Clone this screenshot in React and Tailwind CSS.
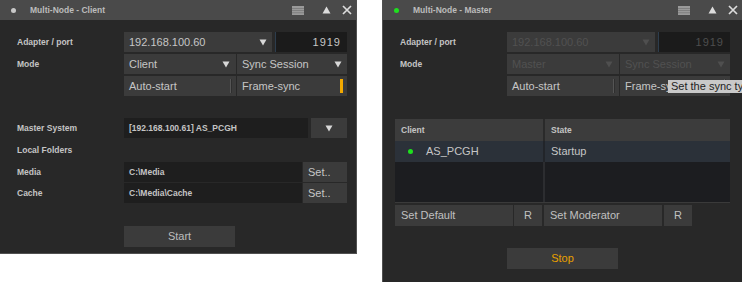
import React from "react";

function Arrow({ dim }) {
  return (
    <svg width="8" height="7" viewBox="0 0 8 7" className="shrink-0">
      <path d="M0.5 0.5 L7.5 0.5 L4 6.5 Z" fill={dim ? "#4f4f4f" : "#d8d8d8"} />
    </svg>
  );
}

function TitleBar({ title, dot }) {
  return (
    <div className="h-[20px] bg-[#4a4a4a] flex items-center shrink-0">
      <div className={`ml-[11px] w-[5px] h-[5px] rounded-full ${dot}`} />
      <span className="ml-[14px] text-[8.5px] font-bold text-[#bcbcbc] leading-none">{title}</span>
      <div className="ml-auto flex items-center">
        <svg width="12" height="9" viewBox="0 0 12 9" className="mr-[18px]">
          <rect x="0" y="0" width="12" height="9" fill="#9a9a9a" />
          <rect x="0" y="2" width="12" height="0.8" fill="#7a7a7a" />
          <rect x="0" y="4.2" width="12" height="0.8" fill="#7a7a7a" />
          <rect x="0" y="6.4" width="12" height="0.8" fill="#7a7a7a" />
        </svg>
        <svg width="9" height="8" viewBox="0 0 9 8" className="mr-[11px]">
          <path d="M4.5 0.5 L8.5 7.5 L0.5 7.5 Z" fill="#dcdcdc" />
        </svg>
        <svg width="10" height="10" viewBox="0 0 10 10" className="mr-[4px]">
          <path d="M1 1 L9 9 M9 1 L1 9" stroke="#dcdcdc" strokeWidth="1.7" />
        </svg>
      </div>
    </div>
  );
}

function Label({ children }) {
  return (
    <div className="w-[124px] pl-[17px] text-[8.5px] font-bold text-[#c4c4c4] shrink-0">{children}</div>
  );
}

function Combo({ w, text, dim, pr = "pr-[5px]" }) {
  return (
    <div className={`${w} h-full bg-[#3b3b3b] flex items-center pl-[5px] ${pr} shrink-0`}>
      <span className={`text-[11px] ${dim ? "text-[#515151]" : "text-[#c6c6c6]"}`}>{text}</span>
      <div className="ml-auto flex">
        <Arrow dim={dim} />
      </div>
    </div>
  );
}

function Toggle({ w, text, on, ml = "" }) {
  return (
    <div className={`${w} ${ml} h-full bg-[#3b3b3b] flex items-center pl-[5px] pr-[4px] shrink-0`}>
      <span className="text-[11px] text-[#c6c6c6] whitespace-nowrap">{text}</span>
      <div
        className={`ml-auto h-[14px] ${on ? "w-[3px] bg-[#f2a900]" : "w-[2px] bg-[#2f2f2f] border-l border-[#555]"}`}
      />
    </div>
  );
}

function TopRows({ master }) {
  const dim = master;
  return (
    <>
      <div className="flex h-[20px] items-center">
        <Label>Adapter / port</Label>
        <Combo w="w-[148px]" text="192.168.100.60" dim={dim} />
        <div className="ml-[3px] w-[72px] h-full bg-[#1b1b1b] border-l border-[#2d3d4d] flex items-center justify-end pr-[6px]">
          <span className={`text-[11px] tracking-[1px] ${dim ? "text-[#4e4e4e]" : "text-[#c6c6c6]"}`}>1919</span>
        </div>
      </div>
      <div className="flex h-[20px] items-center mt-[2px]">
        <Label>Mode</Label>
        <Combo w="w-[112px]" text={master ? "Master" : "Client"} dim={dim} pr="pr-[6px]" />
        <div className="ml-[1px] h-full flex">
          <Combo w="w-[110px]" text="Sync Session" dim={dim} />
        </div>
      </div>
      <div className="flex h-[20px] items-center mt-[2px]">
        <div className="w-[124px] shrink-0" />
        <Toggle w="w-[112px]" text="Auto-start" on={false} />
        <Toggle w="w-[110px]" ml="ml-[1px]" text="Frame-sync" on={!master} />
      </div>
    </>
  );
}

function ClientBody() {
  return (
    <div className="flex flex-col pt-[12px]">
      <TopRows master={false} />
      <div className="flex h-[20px] items-center mt-[22px]">
        <Label>Master System</Label>
        <div className="w-[184px] h-full bg-[#1e1e1e] flex items-center pl-[5px]">
          <span className="text-[8.5px] font-bold text-[#c4c4c4]">[192.168.100.61] AS_PCGH</span>
        </div>
        <div className="ml-[3px] w-[36px] h-full bg-[#3b3b3b] flex items-center justify-center">
          <Arrow />
        </div>
      </div>
      <div className="flex h-[20px] items-center mt-[2px]">
        <Label>Local Folders</Label>
      </div>
      <div className="flex h-[20px] items-center mt-[2px]">
        <Label>Media</Label>
        <div className="w-[178px] h-full bg-[#1e1e1e] flex items-center pl-[5px]">
          <span className="text-[8.5px] font-bold text-[#c4c4c4]">C:\Media</span>
        </div>
        <div className="ml-[1px] w-[44px] h-full bg-[#3b3b3b] flex items-center pl-[5px]">
          <span className="text-[11px] text-[#c6c6c6]">Set..</span>
        </div>
      </div>
      <div className="flex h-[20px] items-center mt-[1px]">
        <Label>Cache</Label>
        <div className="w-[178px] h-full bg-[#1e1e1e] flex items-center pl-[5px]">
          <span className="text-[8.5px] font-bold text-[#c4c4c4]">C:\Media\Cache</span>
        </div>
        <div className="ml-[1px] w-[44px] h-full bg-[#3b3b3b] flex items-center pl-[5px]">
          <span className="text-[11px] text-[#c6c6c6]">Set..</span>
        </div>
      </div>
      <div className="flex mt-[23px]">
        <div className="ml-[124px] w-[111px] h-[21px] bg-[#3b3b3b] flex items-center justify-center">
          <span className="text-[11px] text-[#bdbdbd]">Start</span>
        </div>
      </div>
    </div>
  );
}

function MasterBody() {
  return (
    <div className="flex flex-col pt-[12px]">
      <TopRows master={true} />
      <div className="ml-[12px] mt-[23px] w-[335px] h-[84px] flex flex-col border-b border-[#3a3a3a] bg-[#1c1d20]">
        <div className="flex h-[22px] bg-[#3c3c3c]">
          <div className="w-[150px] flex items-center pl-[6px] border-r-2 border-[#2a2a2a]">
            <span className="text-[8.5px] font-bold text-[#c4c4c4]">Client</span>
          </div>
          <div className="flex-1 flex items-center pl-[6px]">
            <span className="text-[8.5px] font-bold text-[#c4c4c4]">State</span>
          </div>
        </div>
        <div className="flex h-[21px] bg-[#2b3139]">
          <div className="w-[150px] flex items-center border-r-2 border-[#22252a]">
            <div className="ml-[13px] w-[5px] h-[5px] rounded-full bg-[#1ee01e]" />
            <span className="ml-[13px] text-[11px] text-[#c6c6c6]">AS_PCGH</span>
          </div>
          <div className="flex-1 flex items-center pl-[6px]">
            <span className="text-[11px] text-[#c6c6c6]">Startup</span>
          </div>
        </div>
        <div className="flex flex-1">
          <div className="w-[150px] border-r-2 border-[#2c2d30]" />
          <div className="flex-1" />
        </div>
      </div>
      <div className="flex h-[21px] mt-[2px] ml-[12px]">
        <div className="w-[118px] bg-[#3b3b3b] flex items-center pl-[6px]">
          <span className="text-[11px] text-[#c0c0c0]">Set Default</span>
        </div>
        <div className="ml-[1px] w-[28px] bg-[#3b3b3b] flex items-center justify-center">
          <span className="text-[11px] text-[#c0c0c0]">R</span>
        </div>
        <div className="ml-[2px] w-[118px] bg-[#3b3b3b] flex items-center pl-[6px]">
          <span className="text-[11px] text-[#c0c0c0]">Set Moderator</span>
        </div>
        <div className="ml-[2px] w-[28px] bg-[#3b3b3b] flex items-center justify-center">
          <span className="text-[11px] text-[#c0c0c0]">R</span>
        </div>
      </div>
      <div className="flex mt-[22px]">
        <div className="ml-[124px] w-[111px] h-[21px] bg-[#3b3b3b] flex items-center justify-center">
          <span className="text-[11px] text-[#e8a000]">Stop</span>
        </div>
      </div>
    </div>
  );
}

export default function App() {
  return (
    <div className="w-[742px] h-[282px] bg-white flex items-start overflow-hidden relative font-['Liberation_Sans',Arial,sans-serif]">
      <div className="w-[357px] h-[254px] bg-[#282828] border-r border-b border-[#505050] flex flex-col shrink-0">
        <TitleBar title="Multi-Node - Client" dot="bg-[#c8c8c8]" />
        <ClientBody />
      </div>
      <div className="ml-[25px] w-[360px] h-[282px] bg-[#282828] border-l border-[#505050] flex flex-col shrink-0">
        <TitleBar title="Multi-Node - Master" dot="bg-[#1ee01e]" />
        <MasterBody />
      </div>
      <div className="absolute left-[668px] top-[80px] h-[13px] w-[90px] bg-[#c9c9c9] flex items-center pl-[3px]">
        <span className="text-[11px] text-[#1e1e1e] whitespace-nowrap leading-none">Set the sync type</span>
      </div>
    </div>
  );
}
